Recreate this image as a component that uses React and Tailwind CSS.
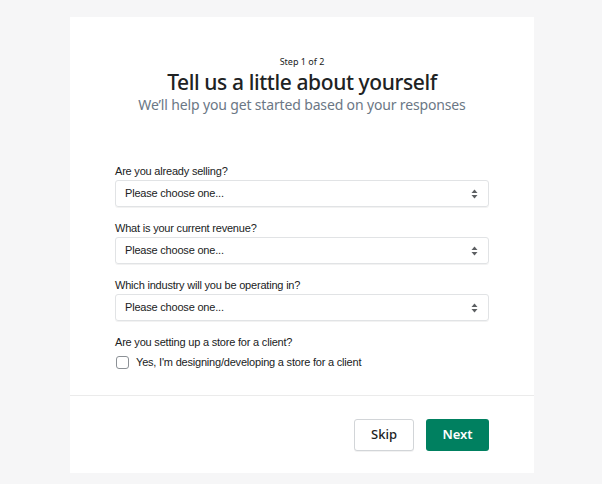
import React from 'react';

const body = { fontFamily: '"Liberation Sans", Arial, sans-serif' };
const heading = { fontFamily: '"Noto Sans", "Open Sans", sans-serif' };

const questions = [
  'Are you already selling?',
  'What is your current revenue?',
  'Which industry will you be operating in?',
];

const SelectField = ({ label }) => (
  <div className="mb-[14px]">
    <p className="text-[11px] leading-[14px] tracking-[-0.2px] text-[#202223] mb-[2px] mt-[1px]">{label}</p>
    <div className="h-[27px] flex items-center justify-between border border-[#e1e3e5] rounded-[3px] pl-[9px] pr-[10px] shadow-[0_1px_0_rgba(0,0,0,0.05)]">
      <span className="text-[11px] tracking-[-0.2px] text-[#202223]">Please choose one...</span>
      <svg width="7" height="10" viewBox="0 0 7 10">
        <path d="M3.5 0.5 L6.5 4 L0.5 4 Z" fill="#5c5f62" />
        <path d="M3.5 9.5 L6.5 6 L0.5 6 Z" fill="#5c5f62" />
      </svg>
    </div>
  </div>
);

const App = () => {
  return (
    <div className="min-h-screen bg-[#f6f6f7] pt-[17px] pb-[10px]" style={body}>
      <div className="ml-[70px] w-[464px] bg-white">
        <div className="px-[45px] pt-[39px] pb-[24px]">
          <div className="text-center" style={heading}>
            <p className="text-[9px] leading-[12px] text-[#202223]">Step 1 of 2</p>
            <h1 className="text-[21px] leading-[26px] font-medium tracking-[-0.4px] text-[#202223] mt-[1px]">
              Tell us a little about yourself
            </h1>
            <p className="text-[14px] leading-[18px] tracking-[-0.15px] text-[#6b7785] mt-[1px]">
              We’ll help you get started based on your responses
            </p>
          </div>

          <div className="mt-[50px]">
            {questions.map((q) => (
              <SelectField key={q} label={q} />
            ))}
            <p className="text-[11px] leading-[14px] tracking-[-0.2px] text-[#202223] mb-[5px] mt-[1px]">
              Are you setting up a store for a client?
            </p>
            <label className="flex items-center gap-[7px]">
              <span className="w-[13px] h-[13px] border border-[#8c9196] rounded-[3px] ml-[1px]" />
              <span className="text-[11px] tracking-[-0.2px] text-[#202223]">
                Yes, I'm designing/developing a store for a client
              </span>
            </label>
          </div>
        </div>

        <div className="border-t border-[#ebebeb] px-[45px] pt-[23px] pb-[22px] flex justify-end gap-[12px]" style={heading}>
          <button className="w-[60px] h-[32px] border border-[#d2d5d8] rounded-[3px] bg-white text-[13px] font-medium text-[#202223] shadow-[0_1px_0_rgba(0,0,0,0.05)]">
            Skip
          </button>
          <button className="w-[63px] h-[32px] rounded-[3px] bg-[#008060] text-[13px] font-semibold text-white">
            Next
          </button>
        </div>
      </div>
    </div>
  );
};

export default App;
